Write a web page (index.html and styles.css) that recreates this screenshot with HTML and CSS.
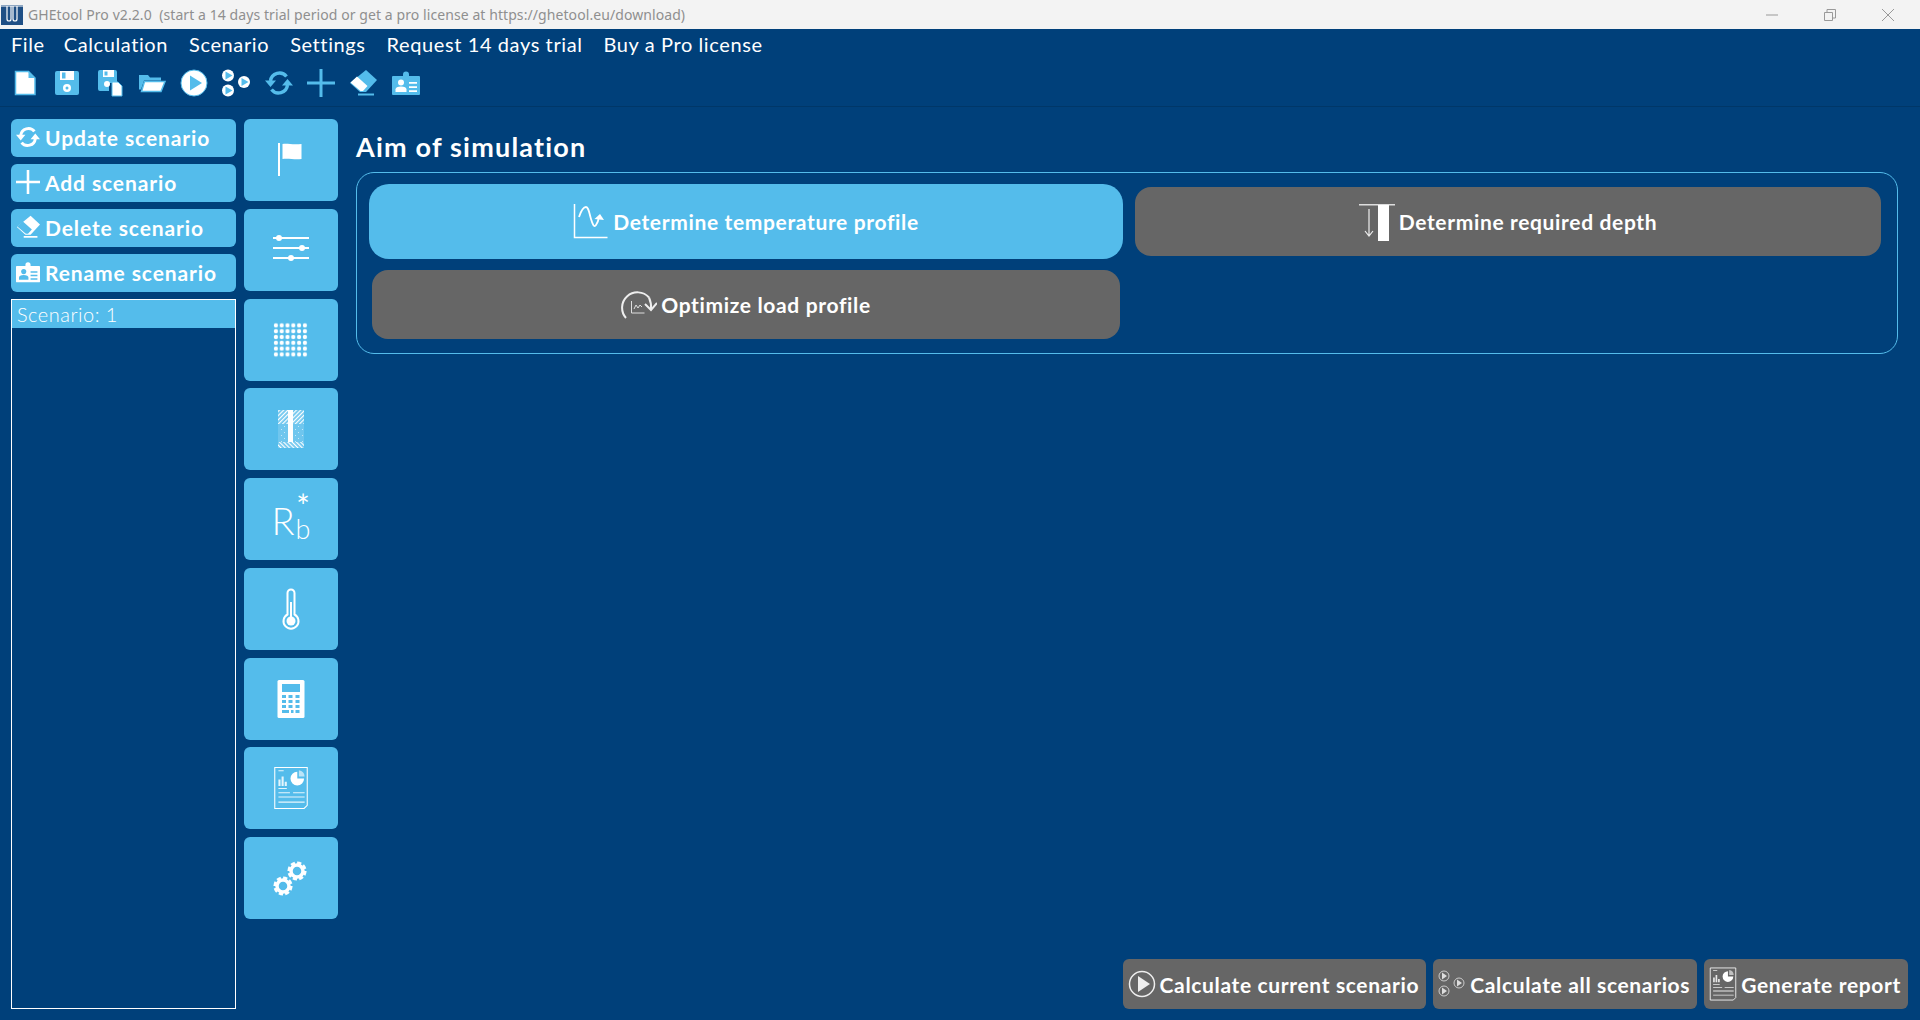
FILE: index.html
```html
<!-- GHEtool main window -->
<html>
  <head>
    <meta http-equiv="content-type" content="text/html;charset=UTF8">
    <link rel="stylesheet" href="styles.css">
    <title>GHEtool Pro v2.2.0</title>
  </head>
  <body>
    <!-- icon set, pages below only <use> these -->
    <svg class="sprite" xmlns="http://www.w3.org/2000/svg">
      <defs>
        <pattern id="dots" x="4" y="4.500" width="5.800" height="5.800" patternUnits="userSpaceOnUse"><circle cx="2.900" cy="2.900" r="2.100" fill="#fff"/></pattern>
        <pattern id="hatch" width="3" height="3" patternUnits="userSpaceOnUse" patternTransform="rotate(45)"><rect width="1.200" height="3" fill="#fff"/></pattern>
        <pattern id="hatch2" width="3" height="3" patternUnits="userSpaceOnUse" patternTransform="rotate(-45)"><rect width="1.200" height="3" fill="#fff"/></pattern>
        <pattern id="speck" width="7" height="6" patternUnits="userSpaceOnUse"><rect x="1" y="1" width="1" height="1" fill="#fff"/><rect x="5" y="4" width="1" height="1" fill="#fff"/></pattern>
      </defs>
      <symbol id="i-file" viewBox="0 0 28 28">
        <path d="M4.500 2.500h13l6.500 6.500v16.500h-19.500z" fill="#fff" stroke="#54bceb" stroke-width="1.500"/>
        <path d="M17.500 3v6h6z" fill="#54bceb"/>
      </symbol>
      <symbol id="i-save" viewBox="0 0 28 28">
        <path d="M2 4a2 2 0 0 1 2-2h20a2 2 0 0 1 2 2v20a2 2 0 0 1-2 2h-20a2 2 0 0 1-2-2z" fill="#54bceb"/>
        <rect x="7" y="2" width="14" height="9" fill="#fff"/>
        <rect x="9" y="3.500" width="3.500" height="6" fill="#54bceb"/>
        <circle cx="14" cy="19" r="4" fill="#fff"/>
        <circle cx="14" cy="19" r="1.500" fill="#54bceb"/>
      </symbol>
      <symbol id="i-saveas" viewBox="0 0 28 28">
        <path d="M2 3a2 2 0 0 1 2-2h15a2 2 0 0 1 2 2v11h-8v8h-9a2 2 0 0 1-2-2z" fill="#54bceb"/>
        <rect x="7" y="1" width="11" height="7" fill="#fff"/>
        <rect x="8.500" y="2.500" width="3" height="4" fill="#54bceb"/>
        <circle cx="11" cy="15" r="3" fill="#fff"/>
        <path d="M16 13h6l4 4v10h-10z" fill="#fff" stroke="#54bceb"/>
      </symbol>
      <symbol id="i-open" viewBox="0 0 28 28">
        <path d="M1 6h9l2 2.500h11v3h-17l-3 9h-2z" fill="#54bceb"/>
        <path d="M6.500 12.500h20.500l-4 10h-19.500z" fill="#fff" stroke="#54bceb" stroke-width="1.500"/>
      </symbol>
      <symbol id="i-play" viewBox="0 0 28 28">
        <circle cx="14" cy="14" r="13" fill="#fff" stroke="#54bceb" stroke-width="1"/>
        <path d="M10 6.500l12 7.500-12 7.500z" fill="#54bceb"/>
      </symbol>
      <symbol id="i-plays" viewBox="0 0 28 28">
        <circle cx="6" cy="6.500" r="6" fill="#fff"/><path d="M3.500 2.500l7 4-7 4z" fill="#54bceb"/>
        <circle cx="22" cy="13" r="6" fill="#fff"/><path d="M19.500 9l7 4-7 4z" fill="#54bceb"/>
        <circle cx="6" cy="21.500" r="6" fill="#fff"/><path d="M3.500 17.500l7 4-7 4z" fill="#54bceb"/>
      </symbol>
      <symbol id="i-refresh" viewBox="0 0 28 28">
        <g fill="none" stroke="currentColor" stroke-width="3.400">
          <path d="M5.500 12a9 9 0 0 1 16-4.500"/>
          <path d="M22.500 16a9 9 0 0 1-16 4.500"/>
        </g>
        <path d="M0 11.500h11l-5.500 6.500zM17 16.500h11l-5.500-6.500z" fill="currentColor"/>
      </symbol>
      <symbol id="i-plus" viewBox="0 0 28 28">
        <path d="M12.500 0h3v12.500h12.500v3h-12.500v12.500h-3v-12.500h-12.500v-3h12.500z" fill="currentColor"/>
      </symbol>
      <symbol id="i-eraser" viewBox="0 0 28 28">
        <path d="M17 1l11 10-11 12h-6l-10-9z" fill="currentColor"/>
        <path d="M8 7.500l10.500 9.500-4.500 5h-2.500l-10-8.500z" fill="var(--eraser, #fff)"/>
        <path d="M9 24.500h16v2h-16z" fill="currentColor"/>
      </symbol>
      <symbol id="i-card" viewBox="0 0 28 28">
        <path d="M1 7h10v-1.500a3 3 0 0 1 6 0v1.500h10a1 1 0 0 1 1 1v17a1 1 0 0 1-1 1h-26a1 1 0 0 1-1-1v-17a1 1 0 0 1 1-1z" fill="currentColor"/>
        <g fill="var(--card, #fff)">
          <circle cx="9" cy="13.500" r="3"/>
          <path d="M3.500 23v-2.500c0-2 2-3 5.500-3s5.500 1 5.500 3v2.500z"/>
          <path d="M17 13h8v1.800h-8zM17 17.200h8v1.800h-8zM17 21.200h8v1.800h-8z"/>
        </g>
      </symbol>
      <symbol id="i-flag" viewBox="0 0 44 44">
        <rect x="9" y="5" width="2" height="33" fill="#fff"/>
        <path d="M13.500 6c5-1 9 1 19 0v15c-7 1-13-1-19 0z" fill="#fff"/>
      </symbol>
      <symbol id="i-sliders" viewBox="0 0 44 44">
        <g fill="#fff">
          <rect x="4" y="9" width="36" height="2"/><circle cx="10" cy="10" r="3"/>
          <rect x="4" y="19" width="36" height="2"/><circle cx="33" cy="20" r="3"/>
          <rect x="4" y="29" width="36" height="2"/><circle cx="22" cy="30" r="3"/>
        </g>
      </symbol>
      <symbol id="i-grid" viewBox="0 0 44 44">
        <rect x="4" y="4.500" width="34.800" height="34.800" fill="url(#dots)"/>
      </symbol>
      <symbol id="i-bore" viewBox="0 0 44 44">
        <rect x="9" y="3" width="26" height="38" fill="#fff" opacity=".16"/>
        <rect x="9" y="3" width="26" height="14" fill="url(#hatch)"/>
        <rect x="9" y="17" width="26" height="18" fill="url(#speck)" opacity=".6"/>
        <rect x="9" y="35" width="26" height="6" fill="url(#hatch2)"/>
        <rect x="19" y="3" width="5" height="32" fill="#fff"/>
      </symbol>
      <symbol id="i-thermo" viewBox="0 0 44 44">
        <path d="M18.500 6a3.500 3.500 0 0 1 7 0v21.500a7.500 7.500 0 1 1-7 0z" fill="none" stroke="#fff" stroke-width="2"/>
        <circle cx="22" cy="34" r="4.500" fill="#fff"/>
        <rect x="21" y="15" width="2" height="16" fill="#fff"/>
      </symbol>
      <symbol id="i-calc" viewBox="0 0 44 44">
        <path d="M10 3h24a1.500 1.500 0 0 1 1.500 1.500v35a1.500 1.500 0 0 1-1.500 1.500h-24a1.500 1.500 0 0 1-1.500-1.500v-35a1.500 1.500 0 0 1 1.500-1.500z" fill="#fff"/>
        <rect x="13" y="7" width="18" height="8" fill="#54bceb"/>
        <path d="M13 18h4v3h-4zM19.500 18h4v3h-4zM26.500 18h4v3h-4zM13 23h4v3h-4zM19.500 23h4v3h-4zM26.500 23h4v3h-4zM13 28h4v3h-4zM19.500 28h4v3h-4zM26.500 28h4v3h-4zM13 33h7v3h-7zM26.500 33h4v3h-4zM22 33h2.500v3h-2.500z" fill="#54bceb"/>
      </symbol>
      <symbol id="i-report" viewBox="5 1 34 42">
        <path d="M6.500 2.500h31v36l-3 3h-28z" fill="none" stroke="#fff" stroke-width="1"/>
        <path d="M10 5h5v1h-5zM10 14h2v6h-2zM13 11h2v9h-2zM16 16h2v4h-2z" fill="#fff" opacity=".85"/>
        <path d="M28 6.500a6.500 6.500 0 1 0 6.500 6.500h-6.500z" fill="#fff"/>
        <path d="M29.500 5a6.500 6.500 0 0 1 5.500 6h-5.500z" fill="#fff" opacity=".6"/>
        <path d="M10 22h8v1h-8zM10 26h11v1h-11zM24 26h11v1h-11zM10 30h25v1h-25zM10 35h25v1h-25z" fill="#fff" opacity=".85"/>
      </symbol>
      <symbol id="i-gears" viewBox="0 0 44 44">
        <g fill="none" stroke="#fff">
          <circle cx="28" cy="15" r="6" stroke-width="3.500"/>
          <circle cx="28" cy="15" r="8.300" stroke-width="2.600" stroke-dasharray="4.200 2.300"/>
          <circle cx="14" cy="30" r="6" stroke-width="3.500"/>
          <circle cx="14" cy="30" r="8.300" stroke-width="2.600" stroke-dasharray="4.200 2.300"/>
        </g>
      </symbol>
      <symbol id="i-chart" viewBox="0 0 36 36">
        <path d="M1.500 0v33.500h33" fill="none" stroke="#fff" stroke-width="1.500"/>
        <path d="M6 13c2-6 4.500-10 7-10s3 5 5 12c1.500 5 3 9 5 6 1.500-2 2.500-5 3-8" fill="none" stroke="#fff" stroke-width="1.800"/>
        <path d="M21.500 15l5.500-5 4 6z" fill="#fff"/>
      </symbol>
      <symbol id="i-depth" viewBox="0 0 36 38">
        <rect x="0" y="1" width="36" height="1.500" fill="#ddd"/>
        <rect x="19" y="2" width="11" height="36" fill="#fff"/>
        <path d="M10 6v26M6 28l4 5 4-5" fill="none" stroke="#eee" stroke-width="1.200"/>
      </symbol>
      <symbol id="i-optim" viewBox="0 0 36 36">
        <path d="M5 31a14 14 0 0 1 23-20.500" fill="none" stroke="#eee" stroke-width="2"/>
        <path d="M24 17l6 6 6-7" fill="none" stroke="#eee" stroke-width="2"/>
        <path d="M30 22c.5-4-.5-8-2-11.500" fill="none" stroke="#eee" stroke-width="2"/>
        <path d="M10.500 14v12h13M13 22l2-4 2 3 2-3 2 2" fill="none" stroke="#ddd" stroke-width="1"/>
      </symbol>
    </svg>

    <!-- window title -->
    <div class="titlebar">
      <svg class="logo" viewBox="0 0 22 20">
        <rect width="22" height="20" fill="#1f4f85"/>
        <path d="M0 1h22M6 1v13a2 2 0 0 0 4 0v-13M12 1v13a2 2 0 0 0 4 0v-13" fill="none" stroke="#fff" stroke-width="1.200"/>
      </svg>
      <span class="title_text">GHEtool Pro v2.2.0&nbsp; (start a 14 days trial period or get a pro license at https://ghetool.eu/download)</span>
      <div class="window_btns">
        <svg viewBox="0 0 14 14"><path d="M1 7h12" stroke="#999" fill="none"/></svg>
        <svg viewBox="0 0 14 14"><path d="M1.500 4.500h8v8h-8zM4 4.500v-3h8.500v8.500h-3" stroke="#999" fill="none"/></svg>
        <svg viewBox="0 0 14 14"><path d="M1 1l12 12M13 1l-12 12" stroke="#999" fill="none"/></svg>
      </div>
    </div>

    <!-- menu -->
    <div class="menu">
      <span class="menu_file">File</span>
      <span>Calculation</span>
      <span>Scenario</span>
      <span>Settings</span>
      <span>Request 14 days trial</span>
      <span>Buy a Pro license</span>
    </div>

    <!-- toolbar -->
    <div class="toolbar">
      <svg><use href="#i-file"/></svg>
      <svg><use href="#i-save"/></svg>
      <svg><use href="#i-saveas"/></svg>
      <svg><use href="#i-open"/></svg>
      <svg><use href="#i-play"/></svg>
      <svg><use href="#i-plays"/></svg>
      <svg class="blue"><use href="#i-refresh"/></svg>
      <svg class="blue"><use href="#i-plus"/></svg>
      <svg class="blue"><use href="#i-eraser"/></svg>
      <svg class="blue"><use href="#i-card"/></svg>
    </div>

    <div class="main">
      <!-- scenarios -->
      <div class="scenarios">
        <button class="side_btn"><svg><use href="#i-refresh"/></svg>Update scenario</button>
        <button class="side_btn"><svg><use href="#i-plus"/></svg>Add scenario</button>
        <button class="side_btn"><svg><use href="#i-eraser"/></svg>Delete scenario</button>
        <button class="side_btn"><svg><use href="#i-card"/></svg>Rename scenario</button>
        <div class="list">
          <div class="list_item">Scenario: 1</div>
        </div>
      </div>

      <!-- pages -->
      <div class="tabs">
        <button class="tab"><svg><use href="#i-flag"/></svg></button>
        <button class="tab"><svg><use href="#i-sliders"/></svg></button>
        <button class="tab"><svg><use href="#i-grid"/></svg></button>
        <button class="tab"><svg><use href="#i-bore"/></svg></button>
        <button class="tab"><span class="rb"><span class="rb_r">R</span><span class="rb_side"><span class="rb_star">*</span><span class="rb_b">b</span></span></span></button>
        <button class="tab"><svg><use href="#i-thermo"/></svg></button>
        <button class="tab"><svg><use href="#i-calc"/></svg></button>
        <button class="tab"><svg><use href="#i-report"/></svg></button>
        <button class="tab"><svg><use href="#i-gears"/></svg></button>
      </div>

      <div class="content">
        <div class="heading">Aim of simulation</div>
        <div class="frame">
          <button class="aim active"><svg><use href="#i-chart"/></svg>Determine temperature profile</button>
          <button class="aim"><svg><use href="#i-depth"/></svg>Determine required depth</button>
          <button class="aim"><svg><use href="#i-optim"/></svg>Optimize load profile</button>
        </div>
        <div class="actions">
          <button class="action"><svg class="action_icon" viewBox="0 0 28 28"><circle cx="14" cy="14" r="12.500" fill="none" stroke="#eee" stroke-width="1.500"/><path d="M10 6l12 8-12 8z" fill="#eee"/></svg>Calculate current scenario</button>
          <button class="action"><svg class="action_icon" viewBox="0 0 28 28"><g fill="none" stroke="#ccc"><circle cx="6" cy="6" r="5"/><circle cx="21" cy="13" r="5"/><circle cx="6" cy="21" r="5"/></g><path d="M4 2.500l5 3.500-5 3.500zM19 9.500l5 3.500-5 3.500zM4 17.500l5 3.500-5 3.500z" fill="#ddd"/></svg>Calculate all scenarios</button>
          <button class="action"><svg class="action_icon"><use href="#i-report"/></svg>Generate report</button>
        </div>
      </div>
    </div>
  </body>
</html>
```

FILE: styles.css
```css
html, body{
  height: 100%;
}
body{
  margin: 0;
  display: flex;
  flex-direction: column;
  overflow: hidden;
  background: #00407a;
  color: #fff;
  font-family: "Lato", "Noto Sans", sans-serif;
}
button{
  border: 0;
  padding: 0;
  color: #fff;
  font-family: inherit;
}
/* not display:none, the patterns would stop working */
.sprite{
  width: 0;
  height: 0;
  flex: none;
}

/* window title */
.titlebar{
  height: 29px;
  flex: none;
  display: flex;
  align-items: center;
  background: #f3f3f3;
  color: #8f8f8f;
  font-family: "Noto Sans", sans-serif;
  font-size: 14px;
  letter-spacing: 0.08px;
}
.logo{
  width: 22px;
  height: 20px;
  margin: 0 5px 0 1px;
}
.window_btns{
  margin-left: auto;
  display: flex;
  gap: 44px;
  padding-right: 25px;
}
.window_btns svg{
  width: 14px;
  height: 14px;
}

/* menu and toolbar */
.menu{
  height: 30px;
  flex: none;
  display: flex;
  align-items: center;
  gap: 21px;
  padding-left: 11px;
  font-size: 20px;
  letter-spacing: 0.6px;
}
.menu_file{
  margin-right: -2px;
}
.toolbar{
  height: 46px;
  flex: none;
  display: flex;
  align-items: center;
  gap: 14.300px;
  padding: 1px 0 0 11px;
  border-bottom: 1px solid #003768;
}
.toolbar svg{
  width: 28px;
  height: 28px;
  color: #54bceb;
  --eraser: #fff;
  --card: #00407a;
}
.toolbar svg.blue{
  --card: #fff;
}

/* main part */
.main{
  flex: 1;
  display: flex;
  padding: 12px 12px 11px 11px;
  min-height: 0;
}
.scenarios{
  width: 225px;
  flex: none;
  display: flex;
  flex-direction: column;
  gap: 7px;
}
.side_btn{
  height: 38px;
  flex: none;
  display: flex;
  align-items: center;
  gap: 5px;
  padding: 0 0 2px 5px;
  background: #54bceb;
  border-radius: 6px;
  font-size: 21px;
  font-weight: 700;
  letter-spacing: 0.9px;
  --eraser: #54bceb;
  --card: #54bceb;
}
.side_btn svg{
  width: 24px;
  height: 24px;
  flex: none;
}
.list{
  flex: 1;
  border: 1px solid #fff;
}
.list_item{
  height: 28px;
  line-height: 28px;
  padding-left: 5px;
  background: #54bceb;
  font-size: 20px;
  font-weight: 300;
  letter-spacing: 0.5px;
}

.tabs{
  width: 94px;
  flex: none;
  margin-left: 8px;
  display: flex;
  flex-direction: column;
  gap: 7.750px;
}
.tab{
  height: 82px;
  flex: none;
  display: flex;
  align-items: center;
  justify-content: center;
  background: #54bceb;
  border-radius: 6px;
}
.tab svg{
  width: 44px;
  height: 44px;
}
.rb{
  display: flex;
  font-weight: 300;
}
.rb_r{
  font-size: 38px;
  line-height: 38px;
  margin-top: 3px;
}
.rb_side{
  display: flex;
  flex-direction: column;
  gap: 3px;
  margin-left: 1px;
}
.rb_star{
  font-size: 32px;
  line-height: 16px;
  font-weight: 400;
}
.rb_b{
  font-size: 27px;
  line-height: 24px;
}

.content{
  flex: 1;
  margin-left: 18px;
  display: flex;
  flex-direction: column;
  min-width: 0;
}
.heading{
  height: 51px;
  padding-top: 2px;
  display: flex;
  align-items: center;
  font-size: 27px;
  font-weight: 700;
  letter-spacing: 1.200px;
}
.frame{
  margin-right: 10px;
  display: grid;
  grid-template-columns: 754px 752px;
  grid-template-rows: 75px 75px;
  gap: 8px 9px;
  padding: 11px 12px;
  border: 1px solid #54bceb;
  border-radius: 18px;
}
.aim{
  margin: 3px;
  display: flex;
  align-items: center;
  justify-content: center;
  gap: 4px;
  background: #666;
  border-radius: 16px;
  font-size: 21px;
  font-weight: 700;
  letter-spacing: 0.65px;
}
.aim svg{
  width: 36px;
  height: 38px;
}
.aim.active{
  margin: 0;
  background: #54bceb;
  border-radius: 20px;
}
.actions{
  margin-top: auto;
  display: flex;
  justify-content: flex-end;
  gap: 7px;
}
.action{
  height: 50px;
  display: flex;
  align-items: center;
  gap: 4px;
  padding: 0 7px 0 5px;
  background: #666;
  border-radius: 6px;
  font-size: 21px;
  font-weight: 700;
  letter-spacing: 0.65px;
}
.action_icon{
  width: 28px;
  height: 36px;
}
```
